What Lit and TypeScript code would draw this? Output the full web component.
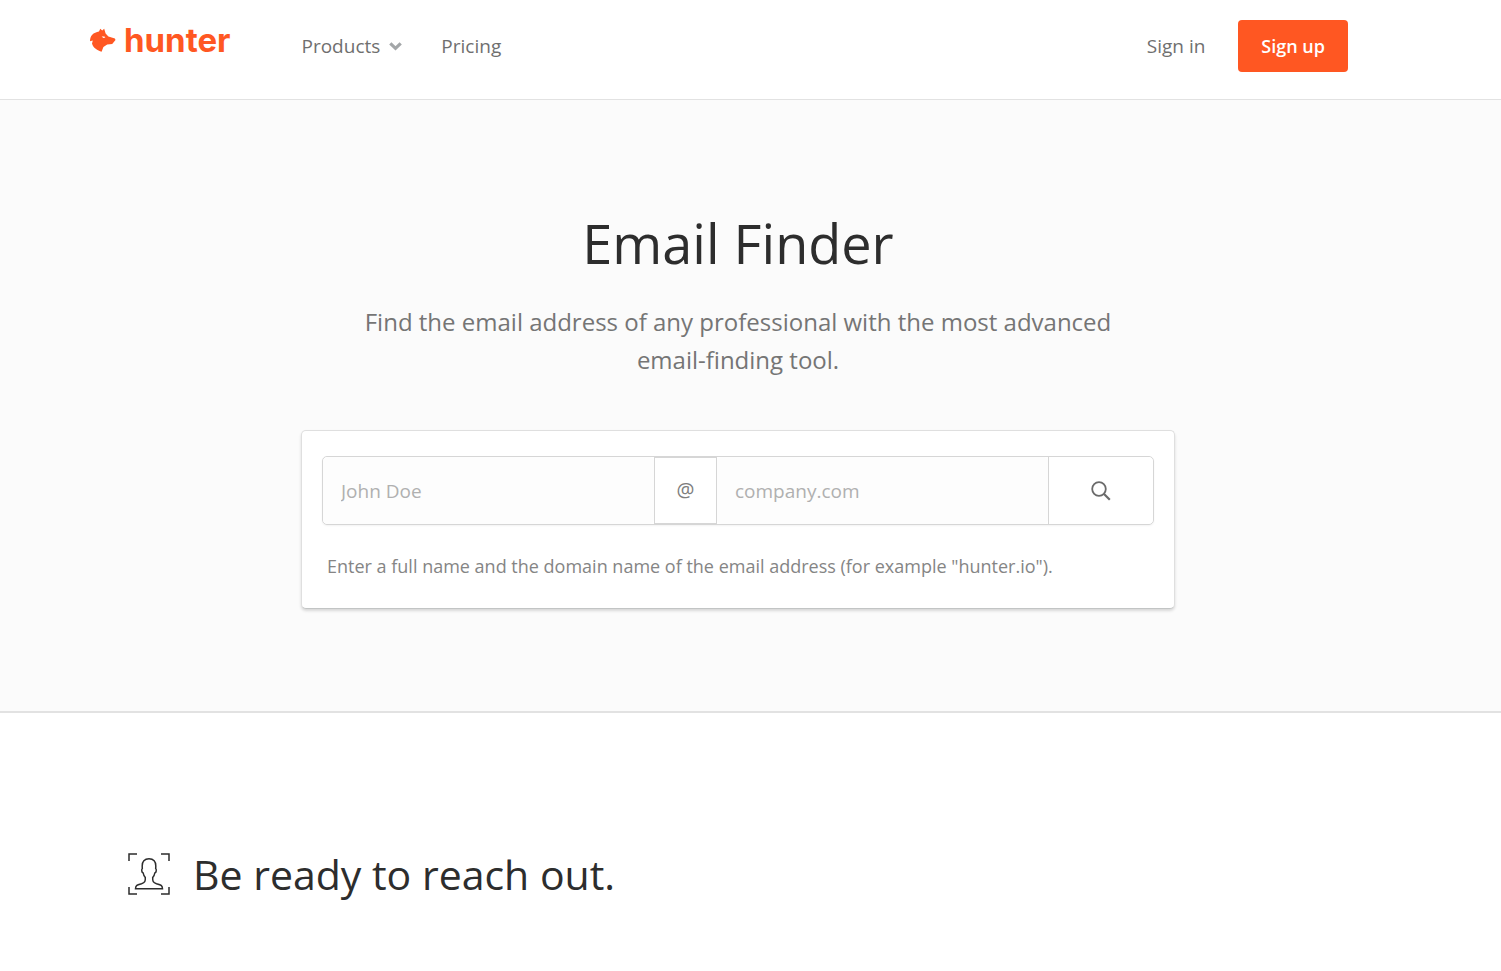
import { LitElement, html, css } from "lit";
import { customElement } from "lit/decorators.js";

@customElement("app-root")
export class AppRoot extends LitElement {
  static styles = css`
    :host {
      display: block;
      min-height: 100vh;
      background: #fff;
      color: #2d2d2d;
      font-family: "Open Sans", "Noto Sans", sans-serif;
    }
    * {
      box-sizing: border-box;
    }
    a {
      color: inherit;
      text-decoration: none;
    }
    .header,
    .hero,
    .features {
      padding-right: 25px;
    }
    .header {
      border-bottom: 1px solid #e2e2e2;
    }
    .bar {
      display: flex;
      align-items: center;
      max-width: 1296px;
      margin: 0 auto;
      padding: 20px 38px 27px 0;
      font-size: 19px;
      line-height: 26px;
      color: #6f6f6f;
    }
    .logo {
      display: flex;
      align-items: center;
      gap: 8px;
      margin-right: 71px;
      padding-bottom: 12px;
      color: #ff5722;
      font: 700 33px/40px Inter, sans-serif;
    }
    .nav {
      display: flex;
      flex: 1;
      gap: 39px;
    }
    .products {
      display: flex;
      align-items: center;
      gap: 9px;
      padding: 0;
      border: 0;
      background: none;
      color: inherit;
      font: inherit;
      cursor: pointer;
    }
    .signup {
      margin-left: 33px;
      padding: 13px 23px;
      border-radius: 4px;
      background: #ff5722;
      color: #fff;
      font-size: 18px;
      font-weight: 600;
    }
    .hero {
      padding-top: 103px;
      padding-bottom: 102px;
      background: #fbfbfb;
      border-bottom: 2px solid #e2e2e2;
      text-align: center;
    }
    .title {
      margin: 0;
      font-size: 54px;
      line-height: 80px;
      font-weight: 400;
    }
    .lead {
      max-width: 800px;
      margin: 20px auto 51px;
      font-size: 24px;
      line-height: 38px;
      color: #757575;
    }
    .card {
      max-width: 874px;
      margin: 0 auto;
      padding: 25px 20px 28px;
      background: #fff;
      border: 1px solid #dfdfdf;
      border-bottom-color: #c2c4c4;
      border-radius: 5px;
      box-shadow: 0 2px 3px rgba(0, 0, 0, 0.14);
      text-align: left;
    }
    .group {
      display: flex;
      height: 69px;
      border: 1px solid #d6d6d6;
      border-radius: 5px;
      box-shadow: 0 1px 2px rgba(0, 0, 0, 0.05);
    }
    .field {
      flex: 1;
      min-width: 0;
      padding: 0 18px;
      border: 0;
      border-radius: 5px;
      background: #fdfdfd;
      color: #2d2d2d;
      font: inherit;
      font-size: 19px;
    }
    .field::placeholder {
      color: #b0b0b0;
      opacity: 1;
    }
    .at {
      display: flex;
      align-items: center;
      justify-content: center;
      width: 63px;
      border: 1px solid #d6d6d6;
      font-size: 20px;
      line-height: 26px;
      padding-bottom: 2px;
      color: #7d7d7d;
    }
    .search {
      display: flex;
      align-items: center;
      justify-content: center;
      width: 105px;
      padding: 0;
      border: 0;
      border-left: 1px solid #d6d6d6;
      border-radius: 0 5px 5px 0;
      background: #fff;
      color: #6a6a6a;
      cursor: pointer;
    }
    .hint {
      margin: 28px 5px 0;
      font-size: 18px;
      line-height: 27px;
      color: #858585;
    }
    .feature {
      display: flex;
      align-items: center;
      gap: 23px;
      max-width: 1220px;
      margin: 0 auto;
      padding: 131px 0 66px;
    }
    .feature-title {
      margin: 0;
      font-size: 41px;
      line-height: 60px;
      font-weight: 400;
    }
    svg {
      display: block;
      flex: none;
    }
  `;

  render() {
    return html`
      <header class="header">
        <div class="bar">
          <a class="logo" href="#">
            <svg width="26" height="25" viewBox="0 0 26 25" fill="currentColor" aria-hidden="true">
              <path fill-rule="evenodd" d="M9 3.4 10.3 0.8 12.2 2.4 14.2 0.8 15.6 5.6 18.4 8.4 24.9 10.4 25.5 12 22.2 16 17.2 16.6 13.4 19 11.6 23.8C7.6 22.6 3 20 2 15.6L2.8 12.4 0 13.2C0 10.6 0.6 8.8 2 7 4 4.6 6.4 4 9 3.4ZM11.6 8.6 13.4 10 15.4 9.4 14.4 8.6Z"/>
            </svg>
            <span>hunter</span>
          </a>
          <nav class="nav">
            <button class="products" type="button">
              Products
              <svg width="13" height="9" viewBox="0 0 13 9" fill="none" stroke="#a3a6a8" stroke-width="3.2" aria-hidden="true">
                <path d="M1.3 1.4 6.5 6.4 11.7 1.4"/>
              </svg>
            </button>
            <a href="#">Pricing</a>
          </nav>
          <a href="#">Sign in</a>
          <a class="signup" href="#">Sign up</a>
        </div>
      </header>
      <main>
        <section class="hero">
          <h1 class="title">Email Finder</h1>
          <p class="lead">Find the email address of any professional with the most advanced email-finding tool.</p>
          <form class="card" @submit=${(e: Event) => e.preventDefault()}>
            <div class="group">
              <input class="field" type="text" placeholder="John Doe" aria-label="Full name" />
              <span class="at">@</span>
              <input class="field" type="text" placeholder="company.com" aria-label="Domain name" />
              <button class="search" type="submit" aria-label="Search">
                <svg width="20" height="20" viewBox="0 0 20 20" fill="none" stroke="currentColor" aria-hidden="true">
                  <circle cx="8" cy="8" r="6.8" stroke-width="1.8"/>
                  <path d="M12.8 12.8 18.8 18.8" stroke-width="2.2"/>
                </svg>
              </button>
            </div>
            <p class="hint">Enter a full name and the domain name of the email address (for example "hunter.io").</p>
          </form>
        </section>
        <section class="features">
          <div class="feature">
            <svg width="42" height="42" viewBox="0 0 42 42" fill="none" stroke="#2d2d2d" stroke-width="1.5" aria-hidden="true">
              <path d="M9 1H1V8M33 1H41V8M1 34V41H9M41 34V41H33"/>
              <path d="M21 5.7C16.5 5.7 14 8.8 14.2 13L14.3 15.6C13.4 16 13.5 19.6 15.2 20C15.5 22 16.4 23.6 17.3 24.6C17.5 28.5 16.9 29.6 13.5 30.7C9.5 31.8 7.7 32 7.5 35.7H34.5C34.3 32 32.5 31.8 28.5 30.7C25.1 29.6 24.5 28.5 24.7 24.6C25.6 23.6 26.5 22 26.8 20C28.5 19.6 28.6 16 27.7 15.6L27.8 13C28 8.8 25.5 5.7 21 5.7Z"/>
            </svg>
            <h2 class="feature-title">Be ready to reach out.</h2>
          </div>
        </section>
      </main>
    `;
  }
}
